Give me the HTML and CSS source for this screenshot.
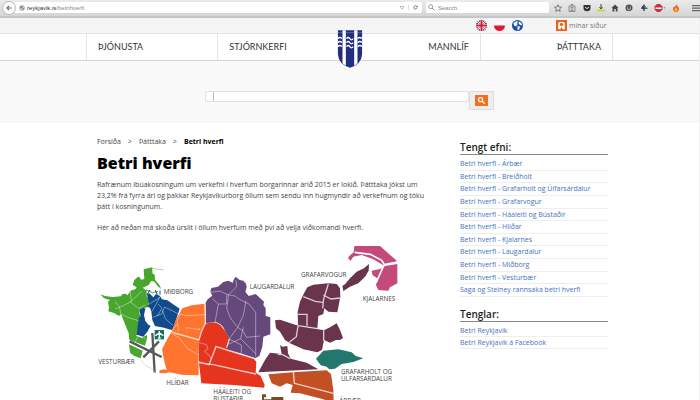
FILE: index.html
```html
<!DOCTYPE html>
<html lang="is">
<head>
<meta charset="utf-8">
<title>Betri hverfi</title>
<link rel="stylesheet" href="styles.css">
</head>
<body>
<div class="browser">
  <button class="back" aria-label="Back"><svg viewBox="0 0 12 12"><path d="M10 6H3M6 3 3 6l3 3" fill="none" stroke="#777" stroke-width="1.8"/></svg></button>
  <div class="address">
    <svg class="globe" viewBox="0 0 12 12"><circle cx="6" cy="6" r="5" fill="#ccc" stroke="#888"/><path d="M2 4l4-2 1 3-3 2zM6 7l4-1-2 4z" fill="#777"/></svg>
    <span class="url">reykjavik.is<span>/betrihverfi</span></span>
    <svg class="drop" viewBox="0 0 6 6"><path d="M1 1.500h4L3 4.500z" fill="none" stroke="#aaa" stroke-width=".7"/></svg>
    <button class="reload" aria-label="Reload"><svg viewBox="0 0 12 12"><path d="M9.500 7.500A4 4 0 1 1 9 3.500" fill="none" stroke="#555" stroke-width="1.800"/><path d="M11 1v4.500H6.500z" fill="#555"/></svg></button>
  </div>
  <div class="find">
    <svg viewBox="0 0 12 12"><circle cx="4.500" cy="4.500" r="3.500" fill="none" stroke="#777" stroke-width="1.200"/><path d="M7 7l4 4" stroke="#777" stroke-width="1.500"/></svg>
    <input type="search" aria-label="Search" placeholder="Search">
  </div>
  <div class="tools">
    <svg viewBox="0 0 16 16"><path d="M8 1.500l2 4.500 5 .5-3.800 3.300 1.200 5L8 12.200l-4.400 2.600 1.200-5L1 6.500 6 6z" fill="none" stroke="#555" stroke-width="1.400"/></svg>
    <svg viewBox="0 0 16 16"><path d="M2 4h12v11H2zM6 4V1h4v3M5 7h6M5 10h6M5 13h6" fill="none" stroke="#777" stroke-width="1.500"/></svg>
    <svg viewBox="0 0 16 16"><path d="M1 2h14v6a7 6.500 0 0 1-14 0z" fill="#333"/><path d="M4.500 6L8 9.500 11.500 6" fill="none" stroke="#fff" stroke-width="2"/></svg>
    <svg viewBox="0 0 16 16"><path d="M8 0v9M5 6l3 4 3-4" fill="none" stroke="#444" stroke-width="2"/><path d="M0 11h16v4H0z" fill="#c5d838"/></svg>
    <svg viewBox="0 0 16 16"><path d="M1 8l7-7 7 7h-2v7h-3.500v-5h-3v5H3V8z" fill="#444"/></svg>
    <svg viewBox="0 0 16 16"><ellipse cx="8" cy="7.500" rx="7" ry="6.500" fill="#555"/><path d="M3 14l1-4 4 3z" fill="#555"/><path d="M4 6h2M10 6h2M4 9q4 4 8 0" fill="none" stroke="#eee" stroke-width="1.300"/></svg>
    <svg viewBox="0 0 16 16"><path d="M8 1v13M4 5l11 4M2 8h8" stroke="#333d50" stroke-width="2.500"/><circle cx="8" cy="7" r="4" fill="#333d50"/><path d="M8 5l4 3" stroke="#5a91cb" stroke-width="2"/></svg>
    <svg class="stop" viewBox="0 0 22 16"><path d="M5 0h6l5 5v6l-5 5H5l-5-5V5z" fill="#ce3038"/><path d="M2 7h12v3H2z" fill="#fff"/><path d="M18 7h4l-2 2z" fill="#555"/></svg>
    <svg viewBox="0 0 16 16"><path d="M8 0q1 3 4 5 3 4 1 8-2 3-5 3-5 0-6-5-1-4 3-7v3q3-2 3-7z" fill="#e4601d"/><ellipse cx="8" cy="11" rx="3" ry="4" fill="#f8ae3a"/></svg>
  </div>
  <button class="menu" aria-label="Menu"><svg viewBox="0 0 16 16"><path d="M0 3h16M0 8h16M0 13h16" stroke="#666" stroke-width="2.500"/></svg></button>
</div>

<div class="page">
<header>
  <div class="top">
    <div class="wrap top-row">
      <a href="#" aria-label="English"><svg viewBox="0 0 22 22"><circle cx="11" cy="11" r="11" fill="#233b80"/><path d="M3.500 3.500l15 15M18.500 3.500l-15 15" stroke="#fff" stroke-width="4"/><path d="M3.500 3.500l15 15M18.500 3.500l-15 15" stroke="#ce1c35" stroke-width="1.500"/><path d="M11 0v22M0 11h22" stroke="#fff" stroke-width="6.500"/><path d="M11 0v22M0 11h22" stroke="#ce1c35" stroke-width="4"/></svg></a>
      <a href="#" aria-label="Polski"><svg viewBox="0 0 22 22"><circle cx="11" cy="11" r="11" fill="#fafafa"/><path d="M0 11h22a11 11 0 0 1-22 0z" fill="#df1834"/></svg></a>
      <a href="#" aria-label="Translate"><svg viewBox="0 0 22 22"><circle cx="11" cy="11" r="11" fill="#174dab"/><path d="M3 6l6-4 4 2-3 2 1 3-3 4-4-2zM14 3l5 3 1 5-4-1-3-3zM11 12l5 1-1 5-4 3z" fill="#f2f6fa"/></svg></a>
      <a href="#" class="mine"><svg viewBox="0 0 20 20"><path d="M0 0h20v20H0z" fill="#eb621a"/><path d="M4 17V7q0-4 6-4t6 4v10h-4l-2-5-2 5z" fill="#fff"/><circle cx="10" cy="8" r="3" fill="#eb621a"/></svg>mínar síður</a>
    </div>
  </div>
  <nav>
    <div class="wrap nav-row">
      <a href="#">ÞJÓNUSTA</a><a href="#">STJÓRNKERFI</a>
      <a href="#">MANNLÍF</a><a href="#">ÞÁTTTAKA</a>
      <svg class="crest" viewBox="0 0 75 114"><path d="M1 1h73v71q-2 31-36.500 41Q3 103 1 72z" fill="#222f7d"/><path d="M15 1h10v106l-10-7zM50 1h10v99l-10 7z" fill="#fff"/><path d="M1 8h73" stroke="#ccd0e3"/><g fill="none" stroke="#fff" stroke-width="4"><path d="M1 26q6-7 12 0M1 38q6-7 12 0M1 50q6-7 12 0M27 26q5-7 10 0t10 0M27 38q5-7 10 0t10 0M27 50q5-7 10 0t10 0M61 26q6-7 12 0M61 38q6-7 12 0M61 50q6-7 12 0"/></g></svg>
    </div>
  </nav>
  <form class="search">
    <input type="text" aria-label="Leita">
    <button type="button" aria-label="Leita"><svg viewBox="0 0 14 12"><path d="M0 0h14v12H0z" fill="#f4701f"/><circle cx="6" cy="5" r="2.200" fill="none" stroke="#fff" stroke-width="1.200"/><path d="M7.500 6.500L10.500 9.500" stroke="#fff" stroke-width="1.600"/></svg></button>
  </form>
</header>

<div class="wrap content">
  <main>
    <div class="crumbs"><a href="#">Forsíða</a><span>&gt;</span><a href="#">Þátttaka</a><span>&gt;</span><b>Betri hverfi</b></div>
    <h1>Betri hverfi</h1>
    <p>Rafrænum íbúakosningum um verkefni í hverfum borgarinnar árið 2015 er lokið. Þátttaka jókst um<br>23,2% frá fyrra ári og þakkar Reykjavíkurborg öllum sem sendu inn hugmyndir að verkefnum og tóku<br>þátt í kosningunum.</p>
    <p>Hér að neðan má skoða úrslit í öllum hverfum með því að velja viðkomandi hverfi.</p>
    <svg class="map" viewBox="21 12 912 474">
      <!-- Vesturbær -->
      <path fill="#48a62f" d="M31 163L45 168 68 171 92 169 98 162 107 161 112 166 122 152 137 147 140 142 128 135 133 120 144 110 149 112 153 119 163 117 161 88 187 82 187 100 194 104 195 119 208 135 214 148 204 138 192 124 183 124 176 135 158 143 170 152 170 168 178 180 174 200 162 205 150 205 147 220 153 225 147 235 145 260 140 288 156 293 170 285 172 292 165 317 118 300 116 280 100 240 93 222 87 228 72 219 55 214 57 205 54 185 60 180 42 175zM117 313L158 332 152 355 133 348 120 338z"/>
      <path fill="none" stroke="#8fb981" stroke-width="2" d="M187 85l34 5"/>
      <path fill="none" stroke="#48a62f" stroke-width="3" d="M190 118l18 24M168 150l20 8 16-4"/>
      <!-- Miðborg -->
      <path fill="#124b8c" d="M171 163L178 160 190 172 198 162 210 168 216 178 232 181 269 206 258 240 247 271 222 263 195 258 187 240 184 215 180 203 172 200 166 206 162 225 166 243 175 254 182 257 172 275 160 290 140 284 146 235 153 226 148 216 150 206 162 203 166 208 177 192z"/>
      <path fill="none" stroke="#124b8c" stroke-width="3" d="M180 150l-9 14M196 150l6 14M210 152v12"/>
      <!-- Hlíðar -->
      <path fill="#ff7530" d="M277 205L305 196 344 191 347 249 335 275 325 300 326 406 280 405 238 397 228 400 208 399 209 391 222 388 230 390 222 360 216 328 232 297 244 275 260 235z"/>
      <!-- Háaleiti og Bústaðir -->
      <path fill="#e6351e" d="M345 252Q372 240 390 254 405 268 418 297L411 322 450 342 490 354 499 366 497 398 512 408 524 435 522 443 430 435 334 430 327 370 325 300 334 272z"/>
      <!-- Laugardalur -->
      <path fill="#66497c" d="M346 190L353 178 367 167 361 156 364 144 384 140 400 126 415 122 428 128 432 118 437 110 449 120 460 122 468 131 470 142 466 155 476 168 497 162 522 185 520 195 527 205 527 228 541 232 541 283 520 290 517 320 508 348 495 355 440 337 410 328 412 312 418 297 405 272Q395 246 370 246L347 250z"/>
      <!-- Grafarvogur -->
      <g fill="#6a344d">
        <path d="M642 160L652 142 670 134 715 130 740 132 750 145 751 170 742 217 715 215 703 205 700 222 685 228 682 266 624 257 623 215 630 185z"/>
        <path d="M757 138L765 133 780 115 800 95 822 85 837 72 836 92 825 110 805 130 780 140 760 153z"/>
        <path d="M555 241L570 239 620 256 703 270 720 262 740 250 750 270 759 294 750 300 738 300 720 308 702 300 696 330 682 337 640 328 600 310 585 300 570 275 558 265z"/>
        <path d="M540 338L575 342 570 315 577 320 592 318 594 340 602 356 650 368 685 388 505 397 525 360z"/>
      </g>
      <!-- Kjalarnes -->
      <path fill="#c34a79" d="M793 18H870L922 64 880 76 850 58 815 45 790 50 782 62 774 55 778 48 791 37zM845 92L870 87 885 78 922 72V130L900 142 895 152 865 150 858 135 862 115 848 106z"/>
      <!-- Grafarholt og Úlfarsárdalur -->
      <path fill="#23776d" d="M678 356L700 332 745 328 785 337 797 348 820 355 790 366 755 372 735 386 718 388 710 380 692 376z"/>
      <!-- Árbær -->
      <path fill="#c35025" d="M535 403L607 397 710 391 723 402 730 450 731 490 700 478 630 460 602 458 608 435 590 430 570 440 545 430z"/>
      <path fill="#744d20" d="M516 463h12v9h-6v6h22v-7h36v15h-64z"/>
      <g class="roads">
        <path d="M75 207l18-7 28-14 35-33M121 186l25 19 20-10M121 155l3 31M75 185l13 15M88 200l5 22 20 10 32 10M138 286l28 10M143 290l-8 18"/>
        <path d="M210 170l-12 23-13 22M178 192l32-20M188 232l27-10 9-21 40 20M217 211l9 25 22 20M204 192l12 12-14 24"/>
        <path d="M270 222l20 5 55-3M270 222l-8 20 4 32M262 252l-16 20M289 269v-6l40 6v-6M240 278l26 14 28 35 32 18"/>
        <path class="main" d="M240 270l10 8 77 22 8-26 11-24-1-60M325 368l45 6 80 18 48 10M325 366l32 8 21-54 72 22 45 14M418 297l-8 26"/>
        <path d="M326 307l23 7 5 12-10 8 15 14 6 12"/>
        <path d="M362 157l27-4 24 11 22 4 15 11 27 13 20 25v132M438 121l2 19-24 24-6 40 11 30 22 28 16 10 10 20 42-4M367 176l18 16h25v-28M385 192l-10 56M468 182l-8 44-17 36-25 34M460 262l-8 34 44 44M452 296l-40 18M418 297l36 18v26"/>
        <path class="main" d="M715 132l-14 45-3 28M640 170l36 14 22 3M700 165l23 12 27-3M624 223h27v35M624 257l79 12M624 258l-5 32-23 18M701 267v35M610 394l3 36 117 30M600 356l-22-12-15-1"/>
        <path class="wide" d="M794 37l47 6 34 18 8 13 39-8M881 77l-23 52"/>
      </g>
      <path d="M119 304l96 47M160 352l47-48M187 279l7 119" stroke="#55595a" stroke-width="7"/>
      <path d="M154 358q6 20 31 27l10 14" fill="none" stroke="#ccc" stroke-width="2"/>
      <path fill="#117163" d="M194 270h28v28h-28z"/><path d="M208 273v22M208 279l-12 8M208 279l12 8M204 294h8" stroke="#fff" stroke-width="4"/>
      <g class="map-labels">
        <text x="221" y="163">MIÐBORG</text><text x="25" y="371">VESTURBÆR</text><text x="229" y="435">HLÍÐAR</text>
        <text x="370" y="461">HÁÁLEITI OG</text><text x="370" y="482">BÚSTAÐIR</text>
        <text x="479" y="147">LAUGARDALUR</text><text x="633" y="111">GRAFARVOGUR</text><text x="818" y="184">KJALARNES</text>
        <text x="753" y="402">GRAFARHOLT OG</text><text x="753" y="423">ÚLFARSÁRDALUR</text><text x="748" y="489">ÁRBÆR</text>
      </g>
    </svg>
  </main>
  <aside>
    <h2>Tengt efni:</h2>
    <ul class="districts">
      <li><a href="#">Betri hverfi - Árbær</a></li><li><a href="#">Betri hverfi - Breiðholt</a></li><li><a href="#">Betri hverfi - Grafarholt og Úlfarsárdalur</a></li><li><a href="#">Betri hverfi - Grafarvogur</a></li><li><a href="#">Betri hverfi - Háaleiti og Bústaðir</a></li><li><a href="#">Betri hverfi - Hlíðar</a></li><li><a href="#">Betri hverfi - Kjalarnes</a></li><li><a href="#">Betri hverfi - Laugardalur</a></li><li><a href="#">Betri hverfi - Miðborg</a></li><li><a href="#">Betri hverfi - Vesturbær</a></li><li><a href="#">Saga og Steiney rannsaka betri hverfi</a></li>
    </ul>
    <h2>Tenglar:</h2>
    <ul><li><a href="#">Betri Reykjavík</a></li><li><a href="#">Betri Reykjavík á Facebook</a></li></ul>
  </aside>
</div>
</div>
</body>
</html>
```
FILE: styles.css
```css
* { box-sizing: border-box; }
body { margin: 0; height: 100vh; overflow: hidden; background: #fff; color: #444; font: 7px/11px "Open Sans", sans-serif; }
a { color: inherit; text-decoration: none; }
svg { display: block; }
button { padding: 0; border: 0; background: none; }
input { min-width: 0; padding: 0; border: 0; outline: 0; background: none; }
.page { border-right: 1px solid #f0f0f0; }
.wrap { width: 527px; max-width: 100%; margin: 0 auto; }

.browser { display: flex; align-items: center; height: 18px; padding: 0 0 1px 2px; background: linear-gradient(#ebebeb, #d5d5d5); border-bottom: 2px solid #c6c6c6; font: 6px/10px "Liberation Sans", sans-serif; }
.back { z-index: 1; width: 14px; height: 14px; padding: 2px; border: 1px solid #bbb; border-radius: 50%; background: #fafafa; }
.address { display: flex; flex: 1; align-items: center; height: 11px; margin-left: -2px; padding-left: 5px; border-radius: 2px; background: #fff; }
.globe { width: 6px; height: 6px; margin-right: 2px; }
.url { flex: 1; color: #333; }
.url span { color: #888; }
.drop { width: 6px; height: 6px; margin-right: 3px; }
.reload { width: 14px; padding: 0 4px; border-left: 1px solid #ddd; }
.find { display: flex; align-items: center; gap: 3px; width: 123px; height: 11px; margin-left: 4px; padding: 0 2px; border-radius: 2px; background: #fff; }
.find svg { width: 7px; height: 7px; }
.find input { flex: 1; font: inherit; }
.find input::placeholder { color: #888; }
.tools { display: flex; justify-content: space-between; width: 126px; margin-left: 5px; }
.tools svg { width: 8px; height: 8px; }
.tools .stop { width: 12px; }
.menu { width: 8px; margin-left: 12px; }

header { background: #f9f9f9; border-bottom: 1px solid #f2f2f2; }
.top { height: 16px; background: #f5f5f5; border-bottom: 1px solid #e2e2e2; }
.top-row { display: flex; align-items: center; gap: 7px; height: 15px; padding-left: 390px; }
.top-row a > svg { width: 11px; height: 11px; }
.top-row .mine { display: flex; align-items: center; gap: 2px; margin-left: 26px; color: #777; font-size: 7px; white-space: nowrap; }
nav { height: 27px; background: #fff; border-bottom: 1px solid #d6d6d6; }
.nav-row { position: relative; display: grid; grid-template-columns: repeat(4, 1fr); height: 26px; border: solid #e4e4e4; border-width: 0 1px; color: #333; font: 9px/26px Lato, sans-serif; }
.nav-row a { padding: 0 11px; }
.nav-row a:nth-child(1), .nav-row a:nth-child(3) { border-right: 1px solid #e4e4e4; }
.nav-row a:nth-child(n+3) { text-align: right; }
.crest { position: absolute; top: -4px; left: 50%; width: 25px; height: 38px; transform: translateX(-50%); }
.search { display: flex; width: 289px; height: 60px; margin: 0 auto; padding-top: 30px; }
.search input { flex: 1; height: 11px; border: 1px solid #e0e0e0; border-radius: 2px; background: linear-gradient(90deg, #fff 7px, #bbb 7px, #bbb 8px, #fff 8px); }
.search button { width: 25px; height: 19px; padding: 2px 5px; border: 1px solid #ddd; border-radius: 1px; background: #eee; }

.content { display: grid; grid-template-columns: 1fr 148px; padding: 14px 5px 0 11px; }
.crumbs { display: flex; gap: 7px; line-height: 12px; }
.crumbs b { color: #000; }
h1 { margin: 5px 0 6px; color: #000; font-size: 16px; font-weight: 800; line-height: 20px; }
p { margin: 0 0 10px; font-size: 7px; line-height: 11px; white-space: nowrap; }
.map { width: 304px; height: 158px; margin-top: 11px; }
.roads { fill: none; stroke: #fff; stroke-opacity: .6; stroke-width: 2; }
.roads .main { stroke-width: 4; stroke-opacity: .75; }
.roads .wide { stroke-width: 5; stroke-opacity: 1; }
.map-labels { fill: #444; font: 19px "Open Sans", sans-serif; }
aside { padding-top: 3px; }
h2 { height: 16px; margin: 0; border-bottom: 1px solid #888; color: #222; font-size: 10px; font-weight: 600; line-height: 16px; }
ul { margin: 3px 0 0; padding: 0; list-style: none; }
.districts { display: grid; grid-auto-rows: 1fr; height: 139px; margin-bottom: 9px; }
li { border-bottom: 1px solid #eee; color: #4473bd; line-height: 11px; }
```
